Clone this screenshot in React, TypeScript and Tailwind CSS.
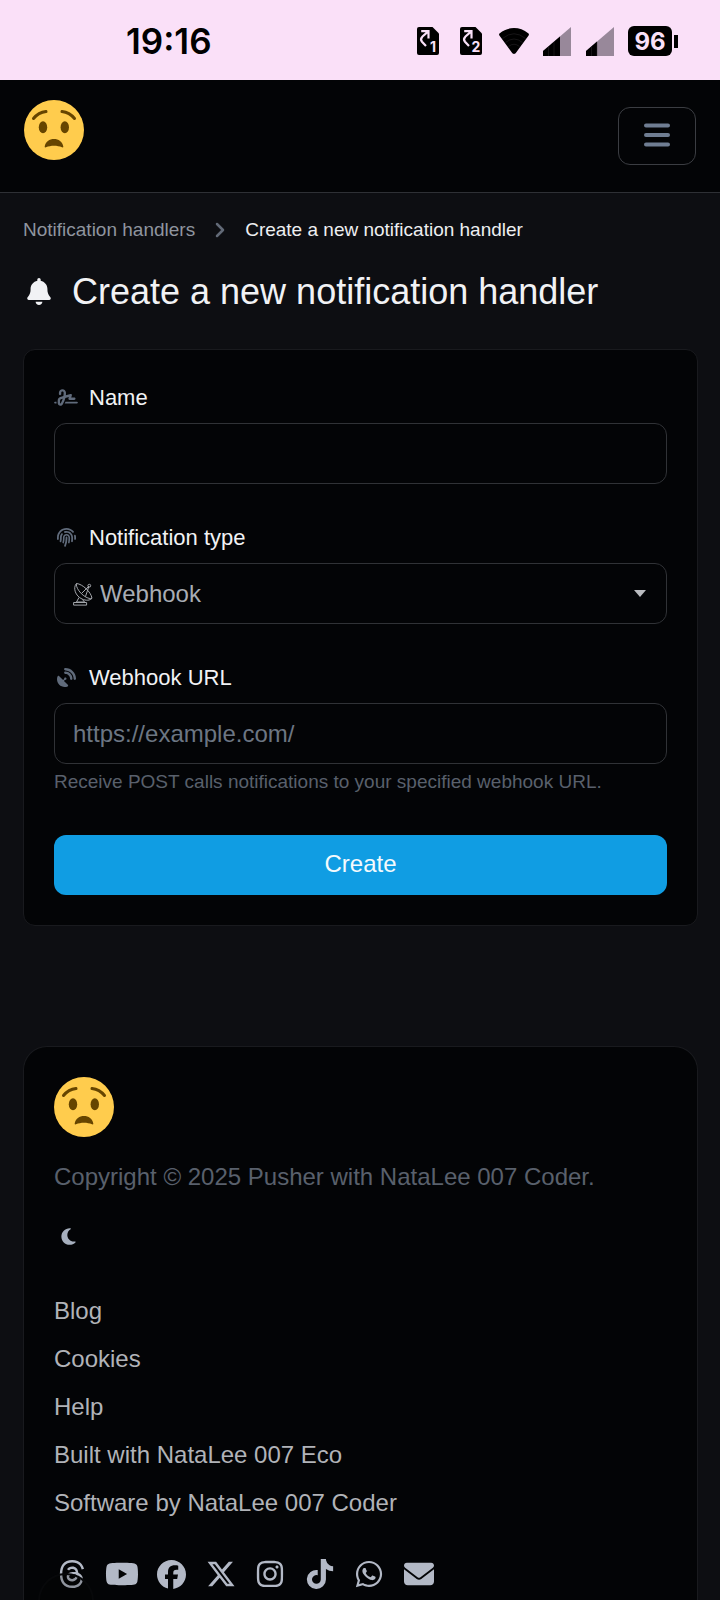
import type { ReactNode } from "react";
import {
  FaBell,
  FaEnvelope,
  FaFacebook,
  FaFingerprint,
  FaInstagram,
  FaMoon,
  FaSatelliteDish,
  FaSignature,
  FaThreads,
  FaTiktok,
  FaWhatsapp,
  FaXTwitter,
  FaYoutube,
} from "react-icons/fa6";

function WorriedFace() {
  return (
    <svg viewBox="0 0 60 60" className="size-[60px]" role="img" aria-label="Pusher">
      <circle cx="30" cy="30" r="30" fill="#ffcc4d" />
      <g fill="#664500">
        <ellipse cx="19" cy="27.3" rx="4.2" ry="6" />
        <ellipse cx="40.8" cy="27.3" rx="4.2" ry="6" />
        <path d="M20.7 46.5C21.5 41.5 25.5 39 30 39s8.500 2.500 9.300 7.500c.1.800-.6 1.200-1.300.8-5-2-11-2-16 0-.7.4-1.400 0-1.300-.8z" />
      </g>
      <g fill="none" stroke="#664500" strokeWidth="3" strokeLinecap="round">
        <path d="M9.500 18.500Q14.500 12.500 22 11.600" />
        <path d="M50.500 18.500Q45.500 12.500 38 11.600" />
      </g>
    </svg>
  );
}

function SimForward({ slot }: { slot: string }) {
  return (
    <svg viewBox="0 0 22 28" className="h-7 w-[22px]" aria-hidden="true">
      <path d="M2 0h13.500L22 6.500V26a2 2 0 0 1-2 2H2a2 2 0 0 1-2-2V2a2 2 0 0 1 2-2z" fill="#000" />
      <path d="M4.200 4.200h7.300V11.500M11.300 4.400L5.500 9.500C3.400 11.500 3.400 12.800 5 14.800L9 19" fill="none" stroke="#fae0f8" strokeWidth="2.200" />
      <text x="16" y="25" textAnchor="middle" fill="#fae0f8" className="font-['Inter',sans-serif] text-[14px] font-bold">
        {slot}
      </text>
    </svg>
  );
}

function Wifi() {
  return (
    <svg viewBox="0 0 30 26" className="h-[26px] w-[30px]" aria-hidden="true">
      <path d="M15 26c-1 0-1.500-.5-2-1.200L.4 7.400C-.2 6.500 0 5.800.8 5.200 9-1.700 21-1.700 29.200 5.200c.8.600 1 1.300.4 2.200L17 24.800c-.5.700-1 1.200-2 1.200z" fill="#000" />
      <g fill="none" stroke="#3a343a" strokeWidth=".4">
        <path d="M3.500 10.500q11.500-9.500 23 0M6.500 14.500q8.500-7 17 0M9.500 18.500q5.500-4.500 11 0" />
      </g>
    </svg>
  );
}

function Signal({ level }: { level: number }) {
  const top = 24 - (level * 24) / 28;
  return (
    <svg viewBox="0 0 28 29" className="h-[29px] w-7" aria-hidden="true">
      <path d="M0 24L28 0v29H0z" fill="#98889a" />
      <path d={`M0 24L${level} ${top}V29H0z`} fill="#000" />
      <path d="M5.500 20v9M11 15v14" stroke="#3a343a" strokeWidth=".4" />
    </svg>
  );
}

function DishOutline() {
  return (
    <svg viewBox="0 0 20 24" className="h-6 w-5 shrink-0" fill="none" stroke="#a3a6ab" strokeWidth="1" aria-hidden="true">
      <path d="M3.500 1.500C-.5 6 2.500 14 9 17c4 1.800 8 1.700 10-.8C18 10 9.500 2 3.500 1.500z" />
      <path d="M3.500 1.500C2.500 5 7 11.500 12 14.500c3 1.900 5.500 2.500 7 1.700M8.500 11.500L16 4M12.500 14.500L16 4" />
      <circle cx="16.300" cy="3.700" r="1.400" />
      <path d="M6 15.500L3.500 20h8L9.500 17.500M.6 20.500h13v2.600H.6z" />
    </svg>
  );
}

function Label({ htmlFor, icon, children }: { htmlFor: string; icon: ReactNode; children: ReactNode }) {
  return (
    <label htmlFor={htmlFor} className="mb-2 flex h-[35px] items-center text-[22px] text-[#f1f2f4]">
      <span className="mr-[11px] flex w-6 justify-center text-[19px] text-[#606b7b]">{icon}</span>
      {children}
    </label>
  );
}

const links = ["Blog", "Cookies", "Help", "Built with NataLee 007 Eco", "Software by NataLee 007 Coder"];

const socials = [
  { name: "Threads", icon: <FaThreads /> },
  { name: "YouTube", icon: <FaYoutube className="w-[34px] shrink-0" /> },
  { name: "Facebook", icon: <FaFacebook className="size-[29px]" /> },
  { name: "X", icon: <FaXTwitter /> },
  { name: "Instagram", icon: <FaInstagram /> },
  { name: "TikTok", icon: <FaTiktok /> },
  { name: "WhatsApp", icon: <FaWhatsapp /> },
  { name: "Email", icon: <FaEnvelope /> },
];

const field = "h-[61px] w-full rounded-xl border border-[#303236] bg-[#030406]";

export default function App() {
  return (
    <div className="relative flex min-h-screen flex-col overflow-hidden bg-[#0d0e12] font-['Liberation_Sans',Arial,sans-serif] text-2xl">
      <div className="flex h-20 items-center justify-between bg-[#fae0f8] pt-[2px] pr-[42px] pl-[126px] text-black">
        <span className="font-['Inter',sans-serif] text-[35px] font-semibold">19:16</span>
        <div className="flex items-center">
          <div className="flex items-center gap-[21px]">
            <SimForward slot="1" />
            <SimForward slot="2" />
          </div>
          <div className="ml-[17px] flex items-center gap-[14px]">
            <Wifi />
            <Signal level={17} />
            <span className="ml-px">
              <Signal level={11} />
            </span>
            <div className="flex items-center gap-[2px]">
              <span className="flex h-[30px] w-11 items-center justify-center rounded-md bg-black pt-[2px] font-['Inter',sans-serif] text-2xl font-bold text-[#fae0f8]">
                96
              </span>
              <span className="h-[13px] w-1 bg-black" />
            </div>
          </div>
        </div>
      </div>

      <header className="flex h-[113px] items-center justify-between border-b border-[#2e3035] bg-[#030406] px-6">
        <a href="#" className="pb-3">
          <WorriedFace />
        </a>
        <button type="button" aria-label="Open menu" className="flex h-[58px] w-[78px] items-center justify-center rounded-xl border border-[#3b3d42] pb-[2px]">
          <svg viewBox="0 0 26 24" className="h-6 w-[26px]" stroke="#6f7d92" strokeWidth="4" strokeLinecap="round" aria-hidden="true">
            <path d="M2 2.500h22M2 12h22M2 21.500h22" />
          </svg>
        </button>
      </header>

      <main className="pt-[22px] pr-[22px] pl-[23px]">
        <nav aria-label="Breadcrumb" className="flex h-[29px] items-center text-[19px]">
          <a href="#" className="text-[#8f959f]">
            Notification handlers
          </a>
          <svg viewBox="0 0 10 16" className="mx-5 h-4 w-[10px]" fill="none" stroke="#626a77" strokeWidth="2.500" strokeLinecap="round" strokeLinejoin="round" aria-hidden="true">
            <path d="M2 2l6 6-6 6" />
          </svg>
          <span className="text-[#eeeff1]">Create a new notification handler</span>
        </nav>

        <h1 className="mt-[26px] flex h-[43px] items-center text-4xl text-[#f1f2f5]">
          <FaBell className="mr-5 ml-[3px] h-[27px] w-[26px]" />
          Create a new notification handler
        </h1>

        <form onSubmit={(e) => e.preventDefault()} className="mt-9 rounded-xl border border-[#191a1e] bg-[#030406] p-[30px]">
          <Label htmlFor="name" icon={<FaSignature className="w-6 shrink-0" />}>
            Name
          </Label>
          <input id="name" type="text" className={`${field} mb-9 px-[18px] text-[#a9adb4]`} />

          <Label htmlFor="type" icon={<FaFingerprint />}>
            Notification type
          </Label>
          <div className={`${field} mb-9 flex items-center px-[18px]`}>
            <DishOutline />
            <select id="type" className="h-full min-w-0 flex-1 appearance-none bg-transparent pl-[7px] text-[#a9adb4] outline-none">
              <option>Webhook</option>
            </select>
            <svg viewBox="0 0 12 7" className="mr-[2px] h-[7px] w-3" fill="#babcc0" aria-hidden="true">
              <path d="M0 0h12L6 7z" />
            </svg>
          </div>

          <Label htmlFor="url" icon={<FaSatelliteDish />}>
            Webhook URL
          </Label>
          <input id="url" type="url" placeholder="https://example.com/" className={`${field} px-[18px] text-[#a9adb4] placeholder:text-[#6c7683]`} />
          <p className="mt-1 text-[19px] leading-7 text-[#59606c]">Receive POST calls notifications to your specified webhook URL.</p>

          <button type="submit" className="mt-[39px] h-[60px] w-full rounded-xl bg-[#109de3] pb-[2px] text-[#f4fafd]">
            Create
          </button>
        </form>
      </main>

      <footer className="mt-[120px] mr-[22px] ml-[23px] flex-1 rounded-t-3xl border border-b-0 border-[#191a1e] bg-[#030406] px-[30px] pt-[30px]">
        <WorriedFace />
        <p className="mt-[22px] leading-9 text-[#59606c]">Copyright © 2025 Pusher with NataLee 007 Coder.</p>
        <button type="button" aria-label="Dark mode" className="mt-[23px] flex h-9 w-7 items-center justify-center text-[19px] text-[#a7b0be]">
          <FaMoon />
        </button>
        <ul className="mt-[33px] text-[#b1b3b8]">
          {links.map((link) => (
            <li key={link} className="leading-[48px]">
              <a href="#">{link}</a>
            </li>
          ))}
        </ul>
        <div className="mt-[29px] flex w-[383px] max-w-full justify-between text-3xl text-[#b3b9c6]">
          {socials.map((s) => (
            <a key={s.name} href="#" aria-label={s.name} className="flex size-9 items-center justify-center">
              {s.icon}
            </a>
          ))}
        </div>
      </footer>

      <div className="absolute bottom-[-29px] left-[38px] size-14 rounded-full border-2 border-[#07080a] bg-[#030406]/20" />
    </div>
  );
}
